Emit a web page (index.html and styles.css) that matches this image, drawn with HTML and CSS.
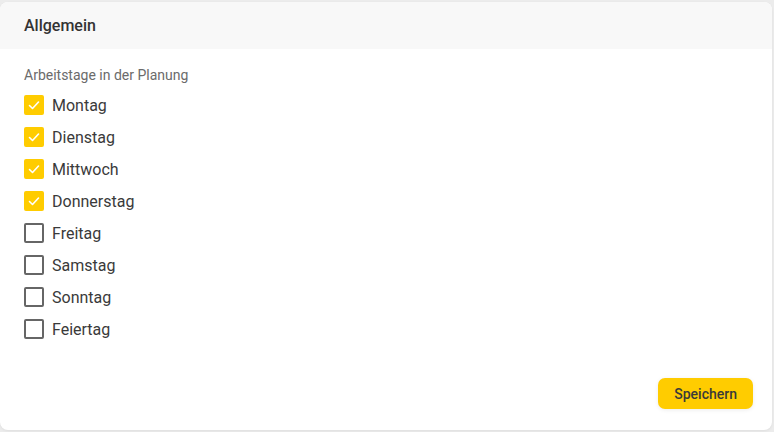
FILE: index.html
```html
<!DOCTYPE html>
<html lang="de">
<head>
<meta charset="utf-8">
<link rel="stylesheet" href="styles.css">
</head>
<body>
<div class="card">
  <div class="card-header">Allgemein</div>
  <div class="card-body">
    <div class="group-label">Arbeitstage in der Planung</div>
    <ul class="days">
      <li class="day"><span class="box checked"><svg viewBox="0 0 20 20"><path d="M5.5 10.5l3 3 6-6.5" /></svg></span>Montag</li>
      <li class="day"><span class="box checked"><svg viewBox="0 0 20 20"><path d="M5.5 10.5l3 3 6-6.5" /></svg></span>Dienstag</li>
      <li class="day"><span class="box checked"><svg viewBox="0 0 20 20"><path d="M5.5 10.5l3 3 6-6.5" /></svg></span>Mittwoch</li>
      <li class="day"><span class="box checked"><svg viewBox="0 0 20 20"><path d="M5.5 10.5l3 3 6-6.5" /></svg></span>Donnerstag</li>
      <li class="day"><span class="box"></span>Freitag</li>
      <li class="day"><span class="box"></span>Samstag</li>
      <li class="day"><span class="box"></span>Sonntag</li>
      <li class="day"><span class="box"></span>Feiertag</li>
    </ul>
  </div>
  <div class="card-footer">
    <button class="btn-save">Speichern</button>
  </div>
</div>
</body>
</html>
```
FILE: styles.css
```css
html, body {
  margin: 0;
  padding: 0;
  background: #ececec;
  font-family: Roboto, "Liberation Sans", Arial, sans-serif;
}
body {
  padding: 2px 2px 2px 0;
}
.card {
  height: 428px;
  background: #ffffff;
  border-radius: 8px;
  overflow: hidden;
  display: flex;
  flex-direction: column;
  box-shadow: 0 1px 3px rgba(0,0,0,0.06);
}
.card-header {
  background: #f8f8f8;
  height: 47px;
  padding: 0 24px;
  display: flex;
  align-items: center;
  font-size: 16px;
  font-weight: 500;
  color: #333333;
}
.card-body {
  padding: 18px 24px 0;
  flex: 1;
}
.group-label {
  font-size: 14px;
  line-height: 16px;
  color: #6b6b6b;
}
.days {
  list-style: none;
  margin: 6px 0 0;
  padding: 0;
}
.day {
  height: 32px;
  display: flex;
  align-items: center;
  font-size: 16px;
  color: #3a3a3a;
}
.box {
  width: 20px;
  height: 20px;
  box-sizing: border-box;
  border: 2px solid #666666;
  border-radius: 2px;
  margin-right: 8px;
  display: inline-flex;
}
.box.checked {
  background: #ffcc00;
  border-color: #ffcc00;
}
.box svg {
  width: 20px;
  height: 20px;
  margin: -2px;
  fill: none;
  stroke: #ffffff;
  stroke-width: 1.6;
  stroke-linecap: round;
  stroke-linejoin: round;
}
.card-footer {
  display: flex;
  justify-content: flex-end;
  padding: 0 19px 21px;
}
.btn-save {
  background: #ffcc00;
  border: none;
  border-radius: 7px;
  height: 31px;
  padding: 0 16px;
  font-family: Roboto, "Liberation Sans", Arial, sans-serif;
  font-size: 14px;
  font-weight: 500;
  color: #3a3a3a;
  box-shadow: 0 1px 4px rgba(0,0,0,0.08);
}
```
